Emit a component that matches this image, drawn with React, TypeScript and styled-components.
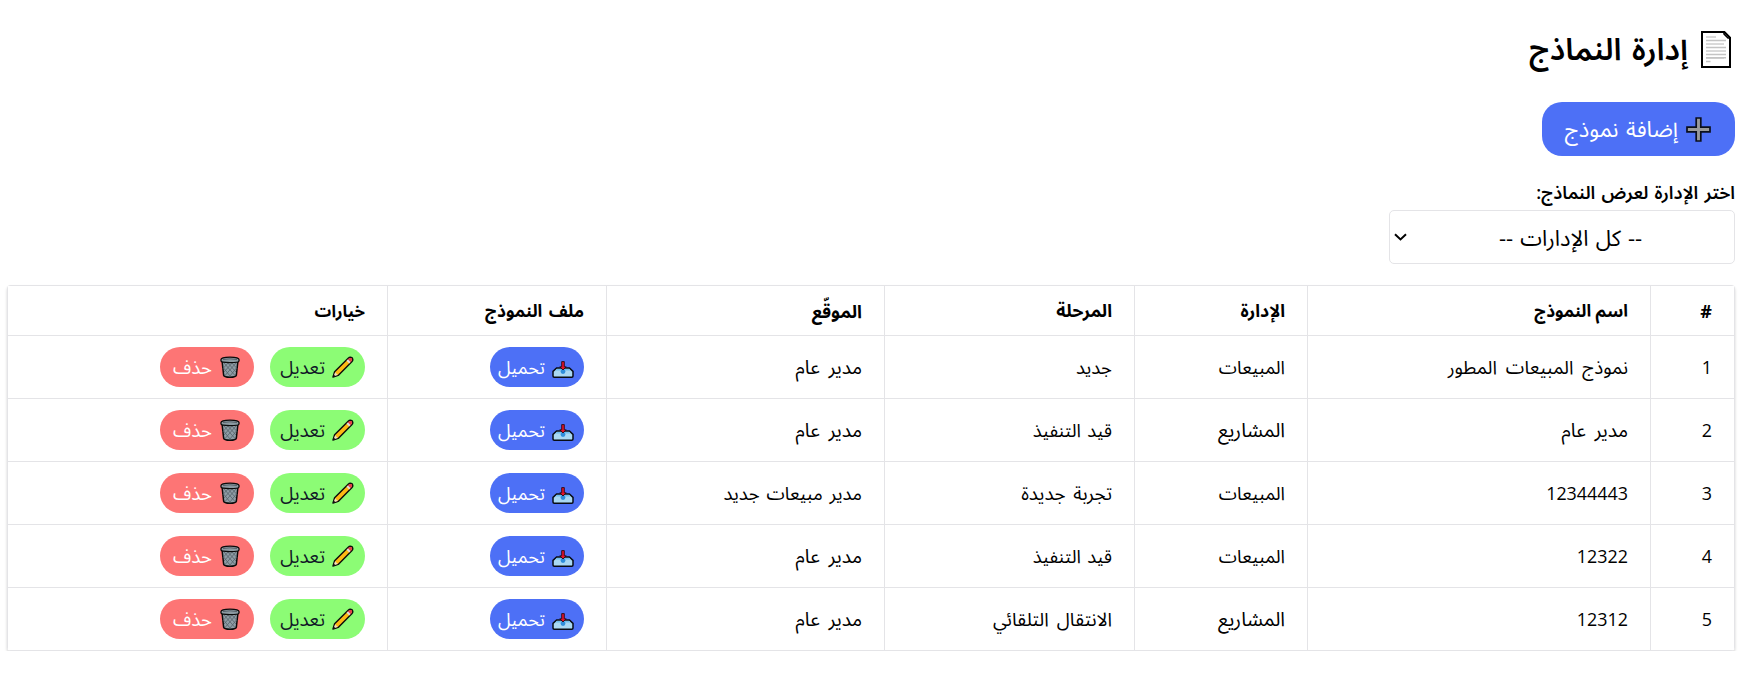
import React from "react";
import styled, { createGlobalStyle, css } from "styled-components";

const Global = createGlobalStyle`
  * { box-sizing: border-box; }
  body { margin: 0; background: #fff; color: #000; font-family: "Segoe UI", "Open Sans", "Noto Sans Arabic", "DejaVu Sans", sans-serif; }
`;

const Page = styled.main`
  padding: 29px 21px 0 7px;
  display: flex;
  flex-direction: column;
  align-items: flex-start;
`;

const Title = styled.h1`
  margin: 0;
  height: 41px;
  padding-right: 4px;
  display: flex;
  align-items: center;
  gap: 13px;
  font-size: 32px;
  font-weight: 600;
  line-height: 41px;
  white-space: nowrap;
`;

const Text = styled.span<{ $size: number; $shift?: number; $word?: number }>`
  font-size: ${(p) => p.$size}px;
  position: relative;
  top: ${(p) => p.$shift ?? 0}px;
  word-spacing: ${(p) => p.$word ?? 0}px;
  white-space: nowrap;
`;

const AddButton = styled.button`
  margin: 32px 0 0;
  width: 193px;
  height: 54px;
  padding: 0 24px 0 0;
  border: 0;
  border-radius: 20px;
  background: #4d70f6;
  color: #fff;
  font-family: inherit;
  display: flex;
  align-items: center;
  gap: 8px;
`;

const FilterLabel = styled.label`
  margin-top: 24px;
  height: 30px;
  line-height: 28px;
  font-weight: 600;
`;

const SelectBox = styled.div`
  width: 346px;
  height: 54px;
  border: 1px solid #e4e4e7;
  border-radius: 5px;
  padding: 0 0 0 4px;
  display: flex;
  align-items: center;
`;

const SelectValue = styled.div`
  flex: 1;
  text-align: center;
`;

const TableCard = styled.div`
  margin-top: 21px;
  width: 1728px;
  border-radius: 4px;
  overflow: hidden;
  box-shadow: 0 2px 3px rgba(0, 0, 0, 0.18);
`;

const Table = styled.table`
  width: 100%;
  table-layout: fixed;
  border-collapse: separate;
  border-spacing: 0;
  border-top: 1px solid #e4e4e7;
  border-right: 1px solid #e4e4e7;
`;

const cell = css`
  padding: 0 22px;
  text-align: right;
  vertical-align: middle;
  border-left: 1px solid #e4e4e7;
  border-bottom: 1px solid #e4e4e7;
  white-space: nowrap;
`;

const Th = styled.th`
  ${cell}
  height: 50px;
  font-weight: 700;
`;

const Td = styled.td`
  ${cell}
  height: 63px;
`;

const Actions = styled.div`
  display: flex;
  gap: 16px;
`;

const Pill = styled.button<{ $bg: string; $fg: string; $w: number; $end: number; $gap: number }>`
  width: ${(p) => p.$w}px;
  height: 40px;
  padding: 0 ${(p) => p.$end}px 0 0;
  border: 0;
  border-radius: 20px;
  background: ${(p) => p.$bg};
  color: ${(p) => p.$fg};
  font-family: inherit;
  display: flex;
  align-items: center;
  gap: ${(p) => p.$gap}px;
`;

const PageIcon = () => (
  <svg width="30" height="37" viewBox="0 0 30 37">
    <path d="M1 1H23.4L29 6.6V36H1Z" fill="#fff" stroke="#000" strokeWidth="2" />
    <path d="M23 1V3L27 7H29" fill="none" stroke="#000" strokeWidth="1.6" />
    <path d="M5 6H15M5 13H23M5 20H25M5 27H23" stroke="#b4b4b4" strokeWidth="1" />
    <path d="M5 9.5H25M5 16.5H25M5 23.5H25M5 26.8H25M5 30.5H9.5" stroke="#c4c4c4" strokeWidth="1.4" />
  </svg>
);

const PlusIcon = () => (
  <svg width="25" height="25" viewBox="0 0 25 25">
    <path d="M10.2 1H14.8V10.2H24V14.8H14.8V24H10.2V14.8H1V10.2H10.2Z" fill="#9b9b9b" stroke="#0b0f1c" strokeWidth="1.7" />
  </svg>
);

const ChevronIcon = () => (
  <svg width="13" height="8" viewBox="0 0 13 8">
    <path d="M1 1.2L6.5 6.4L12 1.2" fill="none" stroke="#000" strokeWidth="2" />
  </svg>
);

const TrayIcon = () => (
  <svg width="22" height="22" viewBox="0 0 22 22">
    <path d="M4.6 12H17.4L21 15.4V20Q21 21.2 19.8 21.2H2.2Q1 21.2 1 20V15.4Z" fill="#a9d8f3" stroke="#080c14" strokeWidth="1.5" />
    <path d="M5 12.9H17L18.6 14.4H3.4Z" fill="#6fbdee" />
    <circle cx="11" cy="15.6" r="2.4" fill="#2f8edb" />
    <path d="M9.7 5.6H12.3V10.8H14.2L11 14L7.8 10.8H9.7Z" fill="#e3122a" stroke="#2a0a12" strokeWidth="0.9" />
  </svg>
);

const PencilIcon = () => (
  <svg width="22" height="22" viewBox="0 0 22 22">
    <path d="M1 21L2.6 15.8L16.2 2.2Q18 0.4 20.2 1.8Q21.6 4 19.8 5.8L6.2 19.4Z" fill="#fdb813" stroke="#0b0b0b" strokeWidth="1.4" strokeLinejoin="round" />
    <path d="M16.6 2.8Q18.2 1.4 19.7 2.3Q20.6 3.9 19.2 5.4L18.2 6.3L15.7 3.8Z" fill="#e5394f" />
    <path d="M14.6 4.8L15.9 3.5L18.5 6.1L17.2 7.4Z" fill="#ddd" />
    <path d="M1.8 20.2L3.1 16.2L5.8 18.9Z" fill="#f1dcc4" />
    <path d="M1.2 20.8L1.9 18.8L3.2 20.1Z" fill="#111" />
  </svg>
);

const TrashIcon = () => (
  <svg width="20" height="22" viewBox="0 0 20 22">
    <path d="M2 4.5L3.6 19Q4 21.2 10 21.2T16.4 19L18 4.5Z" fill="#8e9ca5" stroke="#0b0b0b" strokeWidth="1.5" />
    <path d="M4 7L15 19.5M7 6L16 16M11 6L17 12.5M3.6 12L10 20M16 7L5 19.5M13 6L4 16M9 6L3 12.5M16.4 12L10 20" stroke="#56626a" strokeWidth="0.8" fill="none" />
    <path d="M1 3.6Q1 1.2 10 1.2T19 3.6V5Q19 6.6 10 6.6T1 5Z" fill="#8b99a1" stroke="#0b0b0b" strokeWidth="1.3" />
    <path d="M3 3.6Q10 2 17 3.6" stroke="#56626a" strokeWidth="1" fill="none" />
  </svg>
);

type Label = { text: string; size: number; word?: number; shift?: number };

const widths = [84, 343, 173, 250, 278, 219, 380];

const headers: Label[] = [
  { text: "#", size: 18, shift: 0 },
  { text: "اسم النموذج", size: 17.2 },
  { text: "الإدارة", size: 17.6 },
  { text: "المرحلة", size: 17.8 },
  { text: "الموقّع", size: 18 },
  { text: "ملف النموذج", size: 17.3, word: 2 },
  { text: "خيارات", size: 16.6 },
];

const number = (text: string): Label => ({ text, size: 17.9, shift: 0 });
const sales: Label = { text: "المبيعات", size: 18.4 };
const projects: Label = { text: "المشاريع", size: 19.8 };
const manager: Label = { text: "مدير عام", size: 19.2, word: 3.5 };
const inProgress: Label = { text: "قيد التنفيذ", size: 18.4, word: 1.5 };

const rows: Label[][] = [
  [number("1"), { text: "نموذج المبيعات المطور", size: 18.8, word: 4 }, sales, { text: "جديد", size: 18.5 }, manager],
  [number("2"), manager, projects, inProgress, manager],
  [number("3"), number("12344443"), sales, { text: "تجربة جديدة", size: 18.8, word: 3 }, { text: "مدير مبيعات جديد", size: 18.5, word: 2 }],
  [number("4"), number("12322"), sales, inProgress, manager],
  [number("5"), number("12312"), projects, { text: "الانتقال التلقائي", size: 18.8, word: 3.2 }, manager],
];

export default function App() {
  return (
    <Page dir="rtl">
      <Global />
      <Title>
        <PageIcon />
        <Text $size={30.8} $word={2.5} $shift={-1}>إدارة النماذج</Text>
      </Title>
      <AddButton>
        <PlusIcon />
        <Text $size={22} $word={2} $shift={1}>إضافة نموذج</Text>
      </AddButton>
      <FilterLabel>
        <Text $size={18} $word={1.5} $shift={-2}>اختر الإدارة لعرض النماذج:</Text>
      </FilterLabel>
      <SelectBox>
        <SelectValue>
          <Text $size={22} $word={1.4} $shift={2}>-- كل الإدارات --</Text>
        </SelectValue>
        <ChevronIcon />
      </SelectBox>
      <TableCard>
        <Table>
          <colgroup>
            {widths.map((w, i) => (
              <col key={i} style={{ width: w }} />
            ))}
          </colgroup>
          <thead>
            <tr>
              {headers.map((h) => (
                <Th key={h.text}>
                  <Text $size={h.size} $word={h.word} $shift={h.shift ?? 1}>{h.text}</Text>
                </Th>
              ))}
            </tr>
          </thead>
          <tbody>
            {rows.map((r) => (
              <tr key={r[0].text}>
                {r.map((c, i) => (
                  <Td key={i}>
                    <Text $size={c.size} $word={c.word} $shift={c.shift ?? 1}>{c.text}</Text>
                  </Td>
                ))}
                <Td>
                  <Pill $bg="#4d70f6" $fg="#fff" $w={94} $end={10} $gap={7}>
                    <TrayIcon />
                    <Text $size={18} $shift={1}>تحميل</Text>
                  </Pill>
                </Td>
                <Td>
                  <Actions>
                    <Pill $bg="#8cfc75" $fg="#111827" $w={95} $end={11} $gap={7}>
                      <PencilIcon />
                      <Text $size={18.8} $shift={1}>تعديل</Text>
                    </Pill>
                    <Pill $bg="#fd7575" $fg="#fff" $w={94} $end={14} $gap={8}>
                      <TrashIcon />
                      <Text $size={18.6} $shift={1}>حذف</Text>
                    </Pill>
                  </Actions>
                </Td>
              </tr>
            ))}
          </tbody>
        </Table>
      </TableCard>
    </Page>
  );
}
